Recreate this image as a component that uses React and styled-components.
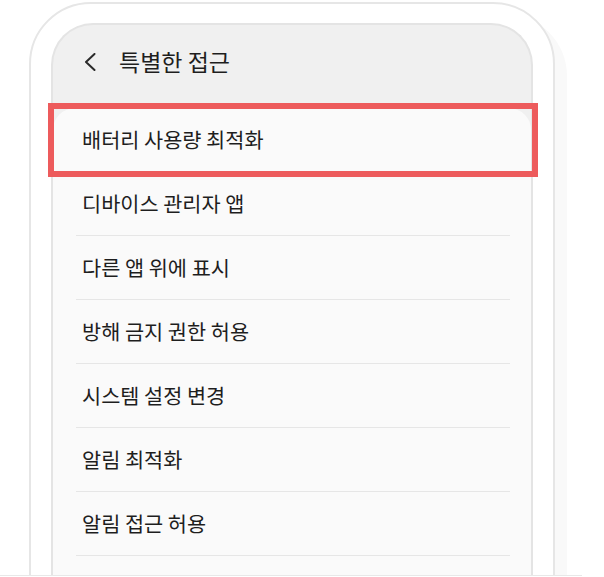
import React from 'react'
import styled, { createGlobalStyle } from 'styled-components'

const GlobalStyle = createGlobalStyle`
  body {
    margin: 0;
    background: #fff;
    font-family: "Noto Sans CJK KR", "Noto Sans", sans-serif;
  }
`

const Stage = styled.div`
  width: 582px;
  height: 575px;
  overflow: hidden;
  border-bottom: 1px solid #e8e8e8;
`

const PhoneFrame = styled.div`
  margin: 2px 0 0 29px;
  width: 526px;
  height: 640px;
  box-sizing: border-box;
  padding: 19px 20px 0;
  border: 2px solid #e6e6e6;
  border-radius: 62px;
  background: #fff;
  box-shadow: 12px 12px 0 #f9f9f9;
`

const Screen = styled.div`
  height: 100%;
  display: flex;
  flex-direction: column;
  border: 2px solid #e4e4e4;
  border-bottom: none;
  border-radius: 42px 42px 0 0;
  background: #f0f0f0;
`

const Header = styled.div`
  height: 83px;
  box-sizing: border-box;
  padding: 23px 0 0 31px;
  display: flex;
  align-items: flex-start;
  gap: 23px;
`

const BackIcon = styled.svg`
  width: 12px;
  height: 18px;
  margin-top: 5px;
  flex-shrink: 0;
`

const Title = styled.h1`
  margin: 0;
  font-size: 23px;
  font-weight: 400;
  line-height: 27px;
  color: #1e1e1e;
`

const Card = styled.div`
  flex: 1;
  background: #fafafa;
  border-radius: 22px 22px 0 0;
`

const Row = styled.div`
  position: relative;
  height: 63px;
  margin: 0 21px 0 23px;
  display: flex;
  align-items: center;
  border-bottom: 1px solid #e6e6e6;
`

const RowLabel = styled.span`
  padding-left: 6px;
  font-size: 20.8px;
  line-height: 1;
  color: #1e1e1e;
`

const Highlight = styled.div`
  position: absolute;
  top: -5px;
  bottom: -6px;
  left: -28px;
  right: -28px;
  border: 6px solid #ed5b5c;
  pointer-events: none;
`

const items = [
  '배터리 사용량 최적화',
  '디바이스 관리자 앱',
  '다른 앱 위에 표시',
  '방해 금지 권한 허용',
  '시스템 설정 변경',
  '알림 최적화',
  '알림 접근 허용',
]

export default function App() {
  return (
    <>
      <GlobalStyle />
      <Stage>
        <PhoneFrame>
          <Screen>
            <Header>
              <BackIcon viewBox="0 0 12 18">
                <path d="M10.5 1 L2 9 L10.5 17" fill="none" stroke="#2a2a2a" strokeWidth="2" strokeLinecap="round" strokeLinejoin="round" />
              </BackIcon>
              <Title>특별한 접근</Title>
            </Header>
            <Card>
              {items.map((label, i) => (
                <Row key={label}>
                  <RowLabel>{label}</RowLabel>
                  {i === 0 && <Highlight />}
                </Row>
              ))}
            </Card>
          </Screen>
        </PhoneFrame>
      </Stage>
    </>
  )
}
